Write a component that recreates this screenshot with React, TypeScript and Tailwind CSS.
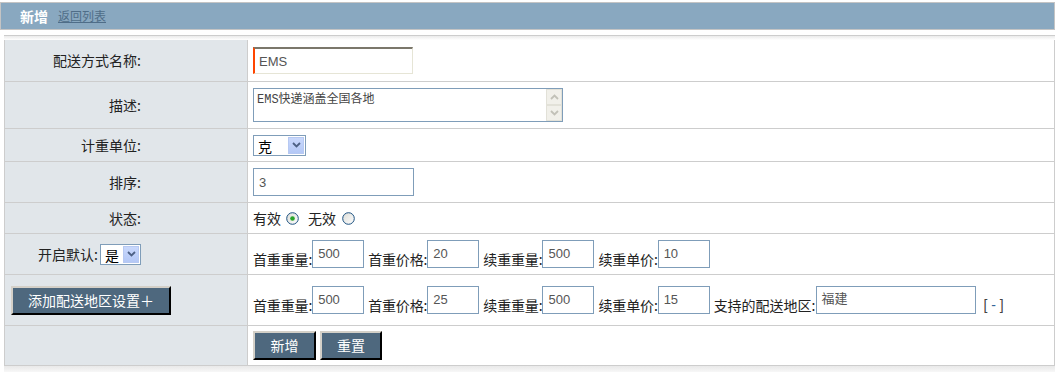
import type { ReactNode } from "react";

const cjk = "font-['Noto_Sans_CJK_SC',sans-serif]";

function Row({
  label,
  height,
  left,
  children,
}: {
  label?: string;
  height: string;
  left?: ReactNode;
  children?: ReactNode;
}) {
  return (
    <div className={`flex border-b border-[#cdcdcd] ${height}`}>
      <div className="w-[243px] shrink-0 bg-[#e1e6ea] border-r border-[#cdcdcd] flex items-center">
        {left ?? (
          <div className="w-full text-right pr-[106px] text-[14px] text-[#222]">
            {label}
          </div>
        )}
      </div>
      <div className="flex-1 flex items-center pl-[5px] bg-white">{children}</div>
    </div>
  );
}

function Chevron({ up, color }: { up?: boolean; color: string }) {
  return (
    <svg width="9" height="6" viewBox="0 0 9 6">
      <path
        d={up ? "M1 5 L4.5 1.5 L8 5" : "M1 1 L4.5 4.5 L8 1"}
        fill="none"
        stroke={color}
        strokeWidth="1.8"
      />
    </svg>
  );
}

function FakeSelect({ value, width }: { value: string; width: string }) {
  return (
    <div className={`relative h-[21px] border border-[#7f9db9] bg-white flex items-center ${width}`}>
      <select
        defaultValue={value}
        className="appearance-none w-full h-full pl-[4px] text-[14px] text-black bg-transparent outline-none"
      >
        <option>{value}</option>
      </select>
      <span className="absolute right-[1px] top-[1px] bottom-[1px] w-[16px] bg-linear-to-b from-[#c9d8fc] to-[#b4c8f6] border border-[#b7c9f2] flex items-center justify-center pointer-events-none">
        <Chevron color="#4d6185" />
      </span>
    </div>
  );
}

function Radio({ checked }: { checked?: boolean }) {
  return (
    <svg width="13" height="13" viewBox="0 0 13 13">
      <defs>
        <linearGradient id="rg" x1="0" y1="0" x2="1" y2="1">
          <stop offset="0" stopColor="#dcdcd6" />
          <stop offset="1" stopColor="#ffffff" />
        </linearGradient>
      </defs>
      <circle cx="6.5" cy="6.5" r="5.8" fill="url(#rg)" stroke="#1c5180" strokeWidth="1" />
      {checked && <circle cx="6.5" cy="6.5" r="2.3" fill="#2aa52a" />}
    </svg>
  );
}

function Field({ label, value }: { label: string; value: string }) {
  return (
    <div className="flex items-end mr-[4px]">
      <span className="text-[14px] leading-[18px] tracking-[-0.15px] text-[#222]">{label}:</span>
      <input
        readOnly
        value={value}
        className="w-[52px] h-[28px] border border-[#7f9db9] pl-[5px] pb-[2px] text-[13px] text-[#555] font-['Liberation_Sans',sans-serif] outline-none"
      />
    </div>
  );
}

function DarkButton({ children, width }: { children: ReactNode; width: string }) {
  return (
    <button
      className={`h-[29px] bg-[#4e687e] text-white text-[14px] border-t-2 border-l-2 border-[#d4d0c8] border-b-2 border-r-2 border-b-black border-r-black ${width}`}
    >
      {children}
    </button>
  );
}

export default function App() {
  return (
    <div className={`w-[1058px] h-[372px] overflow-hidden bg-white ${cjk}`}>
      <div className="pt-[2px] pr-[3px]">
        <div className="h-[28px] border border-[#c4c4c4] bg-[#89a8c0] flex items-center pl-[19px]">
          <span className="font-bold text-white text-[14px]">新增</span>
          <a href="#" className="ml-[10px] text-[12px] underline text-[#4f6d88]">
            返回列表
          </a>
        </div>
      </div>
      <div className="mt-[5px] ml-[4px] mr-[3px] h-[5px] border-t border-[#cdcdcd] bg-linear-to-b from-[#ebebeb] to-white" />

      <div className="ml-[4px] mr-[3px] border-l border-r border-[#cdcdcd]">
        <Row label="配送方式名称:" height="h-[42px]">
          <input
            readOnly
            value="EMS"
            className="w-[160px] h-[27px] border-t-2 border-l-2 border-r border-b border-t-[#7b776b] border-l-[#ff4500] border-r-[#e6e5d6] border-b-[#e6e5d6] pl-[4px] text-[13px] text-[#555] font-['Liberation_Sans',sans-serif] outline-none"
          />
        </Row>
        <Row label="描述:" height="h-[47px]">
          <div className="w-[310px] h-[34px] border border-[#7f9db9] flex bg-white">
            <textarea
              readOnly
              value="EMS快递涵盖全国各地"
              className="flex-1 resize-none overflow-hidden pl-[3px] pt-[4px] text-[12px] leading-[14px] text-[#444] font-['Liberation_Mono','Noto_Sans_CJK_SC',monospace] outline-none"
            />
            <div className="w-[16px] flex flex-col">
              <div className="h-[16px] bg-[#f1f0ea] border border-[#e2e1d8] flex items-center justify-center">
                <Chevron up color="#c2c1b8" />
              </div>
              <div className="h-[16px] bg-[#f1f0ea] border border-[#e2e1d8] flex items-center justify-center">
                <Chevron color="#c2c1b8" />
              </div>
            </div>
          </div>
        </Row>
        <Row label="计重单位:" height="h-[33px]">
          <FakeSelect value="克" width="w-[53px]" />
        </Row>
        <Row label="排序:" height="h-[41px]">
          <input
            readOnly
            value="3"
            className="w-[161px] h-[28px] border border-[#7f9db9] pl-[5px] text-[13px] text-[#555] font-['Liberation_Sans',sans-serif] outline-none"
          />
        </Row>
        <Row label="状态:" height="h-[31px]">
          <div className="flex items-center text-[14px] text-[#222]">
            <span>有效</span>
            <span className="ml-[5px] mr-[9px] flex">
              <Radio checked />
            </span>
            <span>无效</span>
            <span className="ml-[6px] flex">
              <Radio />
            </span>
          </div>
        </Row>
        <Row
          height="h-[41px]"
          left={
            <div className="w-full flex items-center justify-end pr-[106px] text-[14px] text-[#222]">
              <span className="mr-[2px]">开启默认:</span>
              <FakeSelect value="是" width="w-[41px]" />
            </div>
          }
        >
          <Field label="首重重量" value="500" />
          <Field label="首重价格" value="20" />
          <Field label="续重重量" value="500" />
          <Field label="续重单价" value="10" />
        </Row>
        <Row
          height="h-[51px]"
          left={
            <div className="pl-[6px]">
              <DarkButton width="w-[160px]">添加配送地区设置＋</DarkButton>
            </div>
          }
        >
          <Field label="首重重量" value="500" />
          <Field label="首重价格" value="25" />
          <Field label="续重重量" value="500" />
          <Field label="续重单价" value="15" />
          <div className="flex items-end">
            <span className="text-[14px] leading-[18px] text-[#222]">支持的配送地区:</span>
            <textarea
              readOnly
              value="福建"
              className="w-[160px] h-[28px] border border-[#7f9db9] pl-[5px] pt-[3px] text-[13px] leading-[16px] text-[#555] resize-none overflow-hidden outline-none"
            />
            <span className="ml-[8px] text-[14px] leading-[18px] text-[#444] font-['Liberation_Sans',sans-serif]">
              [ <a href="#" className="text-[#336699]">-</a> ]
            </span>
          </div>
        </Row>
        <Row height="h-[40px]" left={<div />}>
          <div className="flex gap-[4px]">
            <DarkButton width="w-[63px]">新增</DarkButton>
            <DarkButton width="w-[62px]">重置</DarkButton>
          </div>
        </Row>
      </div>
      <div className="ml-[4px] mr-[3px] h-[6px] bg-linear-to-b from-[#e9e9e9] to-[#f7f7f7]" />
    </div>
  );
}
